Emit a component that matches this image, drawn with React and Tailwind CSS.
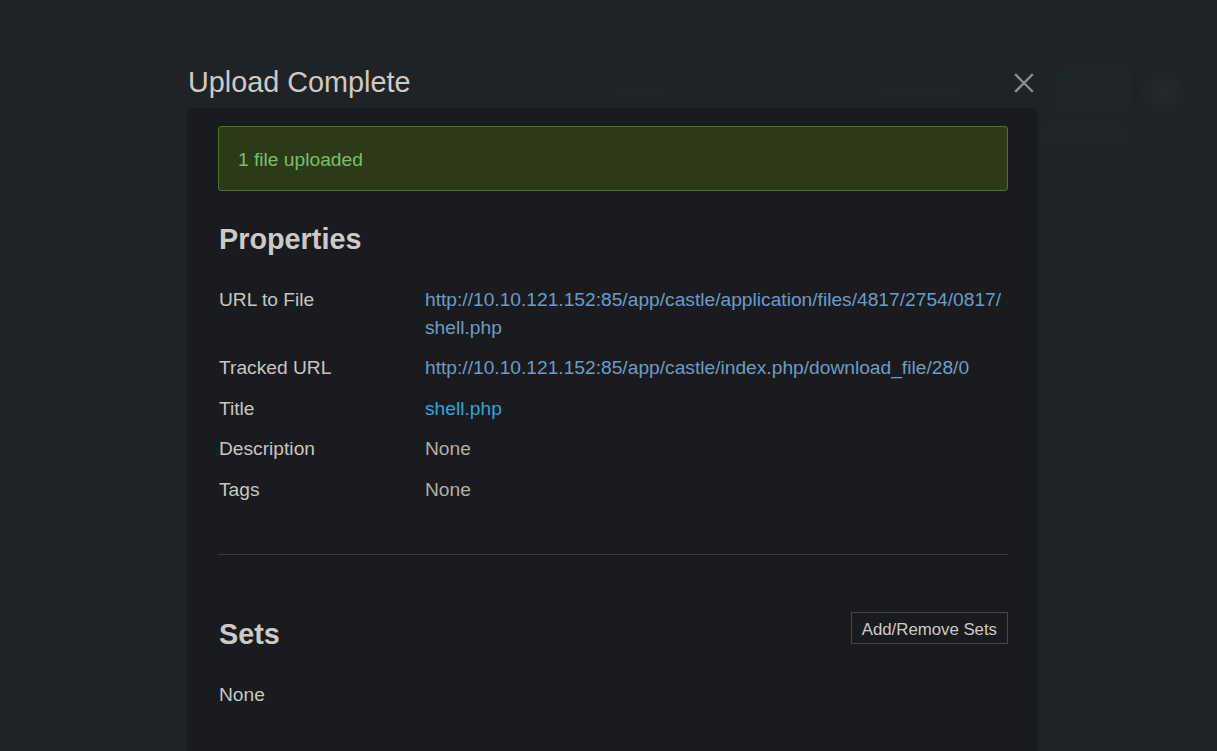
export default function App() {
  const rows = [
    {
      label: "URL to File",
      value: (
        <a className="text-[#6b9bc6]">
          http://10.10.121.152:85/app/castle/application/files/4817/2754/0817/
          <br />
          shell.php
        </a>
      ),
    },
    {
      label: "Tracked URL",
      value: (
        <a className="text-[#6b9bc6]">
          http://10.10.121.152:85/app/castle/index.php/download_file/28/0
        </a>
      ),
    },
    { label: "Title", value: <a className="text-[#2fa4dd]">shell.php</a> },
    { label: "Description", value: <span className="text-[#b3afa8]">None</span> },
    { label: "Tags", value: <span className="text-[#b3afa8]">None</span> },
  ];

  return (
    <div
      className="relative h-[751px] w-full overflow-hidden bg-[#202326]"
      style={{ fontFamily: '"Liberation Sans", Arial, sans-serif' }}
    >
      {/* faint background page elements */}
      <div className="pointer-events-none absolute left-[1058px] top-[66px] h-[50px] w-[72px] rounded-[4px] bg-[#1f272a] blur-[4px]" />
      <div className="pointer-events-none absolute left-[1148px] top-[74px] h-[34px] w-[34px] rounded-full bg-[#26282b] blur-[7px]" />
      <div className="pointer-events-none absolute left-[1040px] top-[122px] h-[26px] w-[88px] rounded-[3px] bg-[#222528] blur-[4px]" />
      <div className="pointer-events-none absolute left-[615px] top-[86px] h-[10px] w-[55px] rounded bg-[#222528] blur-[3px]" />
      <div className="pointer-events-none absolute left-[880px] top-[85px] h-[12px] w-[80px] rounded bg-[#222528] blur-[3px]" />

      <div className="relative ml-[187px] w-[851px] pt-[65px]">
        <div className="mb-[9px] flex items-start justify-between">
          <h2 className="pl-[1px] text-[28.8px] leading-[34px] font-normal text-[#cdcac5]">
            Upload Complete
          </h2>
          <button className="mr-[4px] mt-[8px] flex h-[20px] w-[20px] items-center justify-center">
            <svg width="20" height="20" viewBox="0 0 20 20">
              <path
                d="M2 2 L18 18 M18 2 L2 18"
                stroke="#8c8c8c"
                strokeWidth="2.4"
                strokeLinecap="square"
              />
            </svg>
          </button>
        </div>

        <div className="h-[700px] rounded-t-[5px] bg-[#1a1b1e] pl-[31px] pr-[30px] pt-[18px]">
          <div className="rounded-[3px] border border-[#4a7426] bg-[#2c3b17] pb-[16px] pl-[19px] pt-[19px] text-[19.2px] leading-[28px] text-[#7cbd6c]">
            1 file uploaded
          </div>

          <h3 className="mt-[31px] mb-[29.5px] pl-[1px] text-[28.8px] leading-[34px] font-bold text-[#cdcac5]">
            Properties
          </h3>

          <div className="pl-[1px] text-[19.2px] leading-[28px]">
            {rows.map((r) => (
              <div key={r.label} className="flex pb-[12.5px]">
                <div className="w-[206px] shrink-0 text-[#c9c6c1]">{r.label}</div>
                <div className="min-w-0">{r.value}</div>
              </div>
            ))}
          </div>

          <div className="mt-[38px] h-px bg-[#3a3b3e]" />

          <div className="mt-[57px] flex items-start justify-between">
            <h3 className="mt-[5px] pl-[1px] text-[28.8px] leading-[34px] font-bold text-[#cdcac5]">
              Sets
            </h3>
            <button className="border border-[#45474a] bg-transparent px-[10px] pb-[4px] pt-[8px] text-[16.8px] leading-[18px] text-[#cdcac5]">
              Add/Remove Sets
            </button>
          </div>

          <div className="mt-[30px] pl-[1px] text-[19.2px] leading-[28px] text-[#c9c6c1]">None</div>
        </div>
      </div>
    </div>
  );
}
